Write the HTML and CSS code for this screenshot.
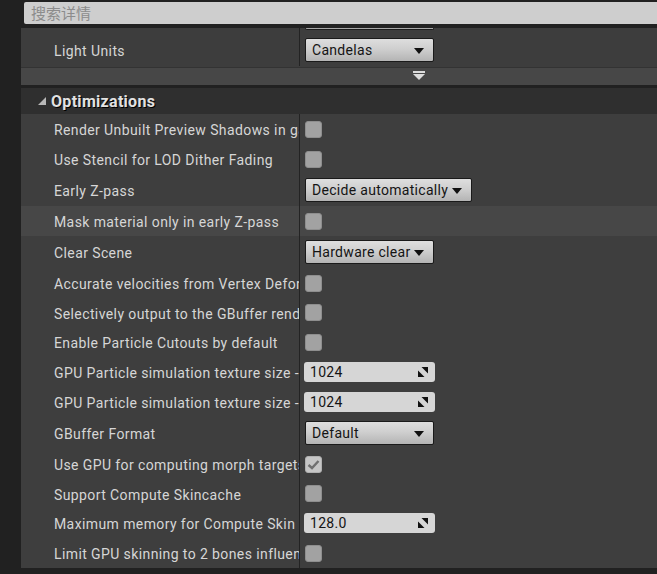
FILE: index.html
```html
<!DOCTYPE html>
<html>
<head>
<meta charset="utf-8">
<link rel="stylesheet" href="styles.css">
</head>
<body>
<div class="app">
  <div class="search">搜索详情</div>
  <div class="panel">
    <div class="top">
      <div class="row top-row">
        <div class="label">Light Units</div>
        <div class="value value-top">
          <div class="stub"></div>
          <div class="combo">Candelas<span class="arrow"></span></div>
        </div>
      </div>
    </div>
    <div class="expander">
      <svg class="expand-icon" width="12" height="10" viewBox="0 0 12 10"><rect x="0" y="0" width="12" height="2" fill="#dcdcdc"/><polygon points="0,3 12,3 6,9" fill="#dcdcdc"/></svg>
    </div>
    <div class="section">
      <div class="header">
        <svg class="caret" width="8" height="8" viewBox="0 0 8 8"><polygon points="8,0 8,8 0,8" fill="#b8b8b8"/></svg>
        <span class="title">Optimizations</span>
      </div>
      <div class="rows">
        <div class="row h30"><div class="label">Render Unbuilt Preview Shadows in game</div><div class="value"><span class="check"></span></div></div>
        <div class="row h30"><div class="label">Use Stencil for LOD Dither Fading</div><div class="value"><span class="check"></span></div></div>
        <div class="row h32"><div class="label">Early Z-pass</div><div class="value"><div class="combo">Decide automatically<span class="arrow"></span></div></div></div>
        <div class="row h30 hl"><div class="label">Mask material only in early Z-pass</div><div class="value"><span class="check"></span></div></div>
        <div class="row h32"><div class="label">Clear Scene</div><div class="value"><div class="combo">Hardware clear<span class="arrow"></span></div></div></div>
        <div class="row h30"><div class="label">Accurate velocities from Vertex Deformation</div><div class="value"><span class="check"></span></div></div>
        <div class="row h29"><div class="label">Selectively output to the GBuffer rendertargets</div><div class="value"><span class="check"></span></div></div>
        <div class="row h30"><div class="label">Enable Particle Cutouts by default</div><div class="value"><span class="check"></span></div></div>
        <div class="row h30"><div class="label">GPU Particle simulation texture size - X</div><div class="value"><div class="spin">1024<svg class="spin-icon" width="10" height="10" viewBox="0 0 10 10"><polygon points="3.5,0 10,0 10,6.5" fill="#111"/><polygon points="0,3.5 0,10 6.5,10" fill="#111"/></svg></div></div></div>
        <div class="row h30"><div class="label">GPU Particle simulation texture size - Y</div><div class="value"><div class="spin">1024<svg class="spin-icon" width="10" height="10" viewBox="0 0 10 10"><polygon points="3.5,0 10,0 10,6.5" fill="#111"/><polygon points="0,3.5 0,10 6.5,10" fill="#111"/></svg></div></div></div>
        <div class="row h32"><div class="label">GBuffer Format</div><div class="value"><div class="combo">Default<span class="arrow"></span></div></div></div>
        <div class="row h30"><div class="label">Use GPU for computing morph targets</div><div class="value"><span class="check checked"><svg width="17" height="17" viewBox="0 0 17 17"><path d="M3.5 9 L7 12 L13.5 5" fill="none" stroke="#707070" stroke-width="2.4"/></svg></span></div></div>
        <div class="row h29"><div class="label">Support Compute Skincache</div><div class="value"><span class="check"></span></div></div>
        <div class="row h30"><div class="label">Maximum memory for Compute Skin Cache per world (MB)</div><div class="value"><div class="spin">128.0<svg class="spin-icon" width="10" height="10" viewBox="0 0 10 10"><polygon points="3.5,0 10,0 10,6.5" fill="#111"/><polygon points="0,3.5 0,10 6.5,10" fill="#111"/></svg></div></div></div>
        <div class="row h30"><div class="label">Limit GPU skinning to 2 bones influence</div><div class="value"><span class="check"></span></div></div>
      </div>
    </div>
  </div>
</div>
</body>
</html>
```
FILE: styles.css
```css
* { box-sizing: border-box; }
html, body {
  margin: 0;
  padding: 0;
  background: #212121;
  height: 100%;
  overflow: hidden;
}
body {
  font-family: Roboto, "Noto Sans CJK SC", sans-serif;
  font-size: 14px;
  color: #d6d6d6;
}
.app {
  display: flex;
  flex-direction: column;
}
.search {
  margin: 2px 0 0 24px;
  height: 22px;
  background: #cecece;
  border-radius: 2px 0 0 2px;
  color: #8c8c8c;
  font-size: 15px;
  line-height: 22px;
  padding-left: 7px;
  font-family: "Noto Sans CJK SC", sans-serif;
}
.panel {
  margin-left: 21px;
  margin-top: 4px;
  display: flex;
  flex-direction: column;
}
.top {
  background: #3d3d3d;
  height: 40px;
  border-bottom: 1px solid #333;
}
.row {
  display: grid;
  grid-template-columns: 278px 1fr;
  align-items: stretch;
}
.top-row { height: 38px; }
.label {
  padding-left: 33px;
  padding-top: 2px;
  white-space: nowrap;
  overflow: hidden;
  display: flex;
  align-items: center;
  letter-spacing: 0.4px;
}
.top-row .label { padding-top: 7px; }
.value {
  border-left: 1px solid #232323;
  padding-left: 5px;
  display: flex;
  align-items: center;
}
.value-top {
  position: relative;
  padding-top: 10px;
  align-items: flex-start;
}
.stub {
  position: absolute;
  left: 5px;
  top: 0;
  width: 129px;
  height: 2px;
  background: #a6a6a6;
  border: 1px solid #1c1c1c;
  border-top: none;
  border-radius: 0 0 2px 2px;
}
.expander {
  height: 17px;
  background: #474747;
  display: flex;
  align-items: flex-start;
  padding-left: 392px;
  padding-top: 3px;
}
.section {
  margin-top: 3px;
}
.header {
  height: 26px;
  background: #2f2f2f;
  display: flex;
  align-items: center;
  padding-left: 17px;
  padding-top: 1px;
}
.caret { margin-right: 5px; margin-top: -1px; }
.title {
  font-weight: bold;
  font-size: 16px;
  letter-spacing: 0.3px;
  color: #e2e2e2;
  text-shadow: 1px 1px 0 #000;
}
.rows { background: #3e3e3e; }
.h29 { height: 29px; }
.h30 { height: 30px; }
.h32 { height: 32px; }
.hl { background: #474747; }
.check {
  width: 17px;
  height: 17px;
  background: #a2a2a2;
  border: 1px solid #8e8e8e;
  border-radius: 3px;
  display: inline-block;
  position: relative;
}
.check.checked { background: #c6c6c6; border-color: #b0b0b0; }
.check svg { position: absolute; left: -1px; top: -1px; }
.combo {
  min-width: 129px;
  height: 24px;
  border: 1px solid #1a1a1a;
  border-radius: 2px;
  background: linear-gradient(#dedede 0%, #cfcfcf 45%, #b4b4b4 100%);
  color: #141414;
  display: inline-flex;
  align-items: center;
  justify-content: space-between;
  padding: 0 9px 0 6px;
  gap: 4px;
  letter-spacing: 0.3px;
  white-space: nowrap;
}
.arrow {
  width: 0;
  height: 0;
  border-left: 5px solid transparent;
  border-right: 5px solid transparent;
  border-top: 6px solid #111;
  margin-top: 1px;
}
.spin {
  margin-left: -1px;
  width: 131px;
  height: 20px;
  background: #d6d6d6;
  border-radius: 3px;
  color: #141414;
  display: flex;
  align-items: center;
  justify-content: space-between;
  padding: 0 7px 0 6px;
  letter-spacing: 0.3px;
}
```
